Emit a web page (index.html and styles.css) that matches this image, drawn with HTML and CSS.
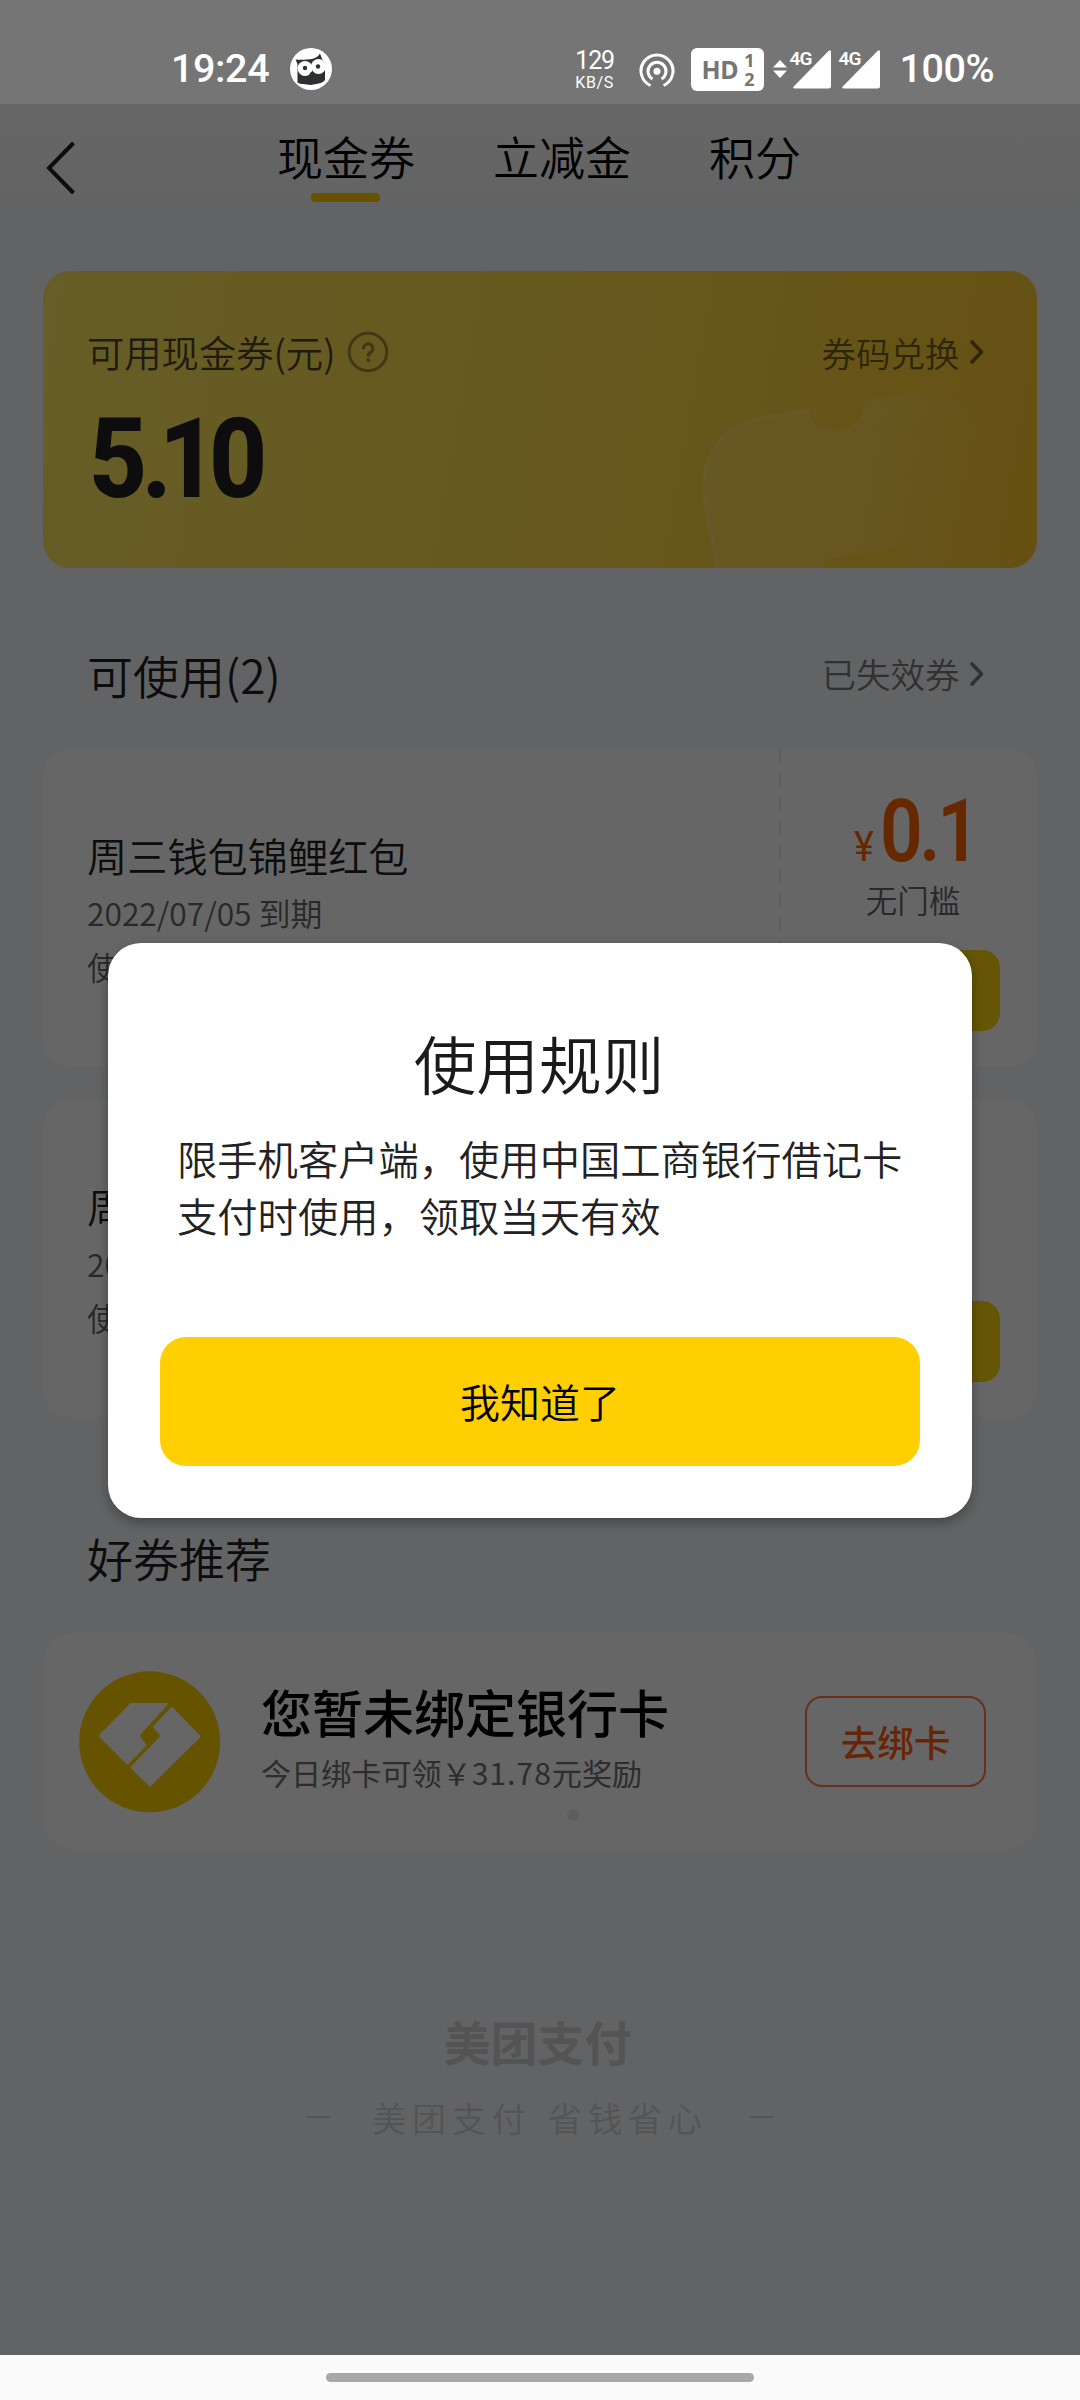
FILE: index.html
```html
<!DOCTYPE html>
<html lang="zh-CN">
<head>
<meta charset="utf-8">
<title>现金券</title>
<link rel="stylesheet" href="styles.css">
</head>
<body>
<div class="phone">
  <header class="status">
    <div class="status-left">
      <span class="clock">19:24</span>
      <svg class="owl" width="42" height="42" viewBox="0 0 42 42">
        <circle cx="21" cy="21" r="21" fill="#fff"/>
        <path d="M5.500 11.500C12 12 18 11.500 22 11C25 10.300 28 9 30 5.500L32.500 12L35 15V32C33 35 27 36 21 37C15 36 10 36.500 7.500 34.500V16Z" fill="#2d3032"/>
        <circle cx="15" cy="20.500" r="7.500" fill="#fff"/>
        <circle cx="28.500" cy="18.500" r="7.500" fill="#fff"/>
        <path d="M19.500 25L22 24L24.500 25L22 29Z" fill="#2d3032"/>
        <circle cx="15" cy="20" r="2.200" fill="#2d3032"/>
        <circle cx="28" cy="18.500" r="2.200" fill="#2d3032"/>
      </svg>
    </div>
    <div class="status-right">
      <div class="speed"><span class="speed-num">129</span><span class="speed-unit">KB/S</span></div>
      <svg class="hotspot" width="36" height="36" viewBox="0 0 36 36" fill="none" stroke="#fff" stroke-width="3">
        <path d="M11.500 32.500A16 16 0 1 1 24.500 32.500"/>
        <path d="M13.500 26A9 9 0 1 1 22.500 26"/>
        <circle cx="18" cy="18.300" r="3.500" fill="#fff" stroke="none"/>
      </svg>
      <div class="hd"><span class="hd-label">HD</span><span class="hd-sims"><span>1</span><span>2</span></span></div>
      <svg class="updown" width="14" height="18" viewBox="0 0 14 18" fill="#fff"><path d="M0 7.500L7 0L14 7.500ZM0 10.500H14L7 18Z"/></svg>
      <div class="signal">
        <svg width="38" height="39" viewBox="0 0 38 39"><path d="M35.500 1Q38 -1 38 2V36Q38 38.500 35.500 38.500H2Q-1 38.500 1 36.300Z" fill="#fff"/></svg>
        <span class="net">4G</span>
      </div>
      <div class="signal">
        <svg width="38" height="39" viewBox="0 0 38 39"><path d="M35.500 1Q38 -1 38 2V36Q38 38.500 35.500 38.500H2Q-1 38.500 1 36.300Z" fill="#fff"/></svg>
        <span class="net">4G</span>
      </div>
      <span class="battery">100%</span>
    </div>
  </header>

  <main class="page">
    <nav class="nav">
      <svg class="back" width="30" height="54" viewBox="0 0 30 54"><path d="M27.500 2L3 27L27.500 52" fill="none" stroke="#222" stroke-width="4"/></svg>
      <div class="tabs">
        <div class="tab active">现金券</div>
        <div class="tab">立减金</div>
        <div class="tab">积分</div>
      </div>
    </nav>

    <section class="hero">
      <svg class="hero-art" width="994" height="297" viewBox="43 271 994 297">
        <defs>
          <linearGradient id="fade" gradientUnits="userSpaceOnUse" x1="700" y1="440" x2="1000" y2="500">
            <stop offset="0" stop-color="#fff" stop-opacity=".12"/>
            <stop offset=".6" stop-color="#fff" stop-opacity=".1"/>
            <stop offset="1" stop-color="#fff" stop-opacity="0"/>
          </linearGradient>
          <linearGradient id="rim" x1="0" y1="0" x2="1" y2="0">
            <stop offset="0" stop-color="#fff" stop-opacity=".16"/>
            <stop offset=".45" stop-color="#fff" stop-opacity=".12"/>
            <stop offset="1" stop-color="#fff" stop-opacity="0"/>
          </linearGradient>
        </defs>
        <path d="M717 568L704 500C698 458 723 423 764 417L807 410C812 442 864 440 866 401L912 394C945 388 962 398 974 420C984 440 990 480 1007 568H909L906 547L824 560L825 568Z" fill="url(#fade)"/>
        <path d="M717 568L704 500C698 458 723 423 764 417L807 410C812 442 864 440 866 401L912 394C930 390 942 391 950 395" fill="none" stroke="url(#rim)" stroke-width="4"/>
      </svg>
      <div class="hero-top">
        <div class="hero-label">可用现金券(元)
          <svg width="42" height="42" viewBox="0 0 42 42" fill="none" stroke="#a18f36" stroke-width="3"><circle cx="21" cy="21" r="18.800"/><path d="M16.500 18.200A4.700 4.700 0 1 1 23.500 21.500Q21.200 22.700 21.200 25.500" stroke-width="3.200"/><path d="M21.200 27.500V30.800" stroke-width="3.600"/></svg>
        </div>
        <div class="link hero-link">券码兑换<svg width="16" height="26" viewBox="0 0 16 26"><path d="M3 3L12.500 13L3 23" fill="none" stroke="currentColor" stroke-width="3.600" stroke-linecap="round" stroke-linejoin="round"/></svg></div>
      </div>
      <div class="balance">5<span class="point">.</span><span class="one">1</span>0</div>
    </section>

    <div class="section-head">
      <h2>可使用(2)</h2>
      <div class="link">已失效券<svg width="16" height="26" viewBox="0 0 16 26"><path d="M3 3L12.500 13L3 23" fill="none" stroke="currentColor" stroke-width="3.600" stroke-linecap="round" stroke-linejoin="round"/></svg></div>
    </div>

    <section class="coupons">
      <article class="coupon">
        <div class="coupon-info">
          <h3>周三钱包锦鲤红包</h3>
          <p>2022/07/05 到期</p>
          <p class="rule">使用</p>
        </div>
        <div class="coupon-side">
          <div class="price"><span class="yen">¥</span><span class="amount">0.1</span></div>
          <div class="cond">无门槛</div>
          <div class="use"></div>
        </div>
      </article>
      <article class="coupon">
        <div class="coupon-info">
          <h3>周三</h3>
          <p>2022</p>
          <p class="rule">使用</p>
        </div>
        <div class="coupon-side">
          <div class="price"></div>
          <div class="cond"></div>
          <div class="use"></div>
        </div>
      </article>
    </section>

    <h2 class="rec-title">好券推荐</h2>
    <section class="bind">
      <svg class="bind-logo" width="142" height="142" viewBox="79 1670.500 142 142">
        <circle cx="149.700" cy="1741.300" r="70.500" fill="#ffcf02"/>
        <g fill="#fff" stroke="#fff" stroke-width="2" stroke-linejoin="round">
          <path d="M131 1703.500H167L140 1733Q138.500 1735.500 140 1737.500L145.500 1744.800L127.400 1763L99.800 1735.500Z"/>
          <path d="M172 1707.500L199.500 1736L150 1785L131.500 1767L160 1737.500Q161.500 1735.300 160 1733L154 1726.500Z"/>
        </g>
      </svg>
      <div class="bind-text">
        <div class="bind-title">您暂未绑定银行卡</div>
        <div class="bind-sub">今日绑卡可领￥<span class="sum">31.78</span>元奖励</div>
      </div>
      <div class="bind-btn">去绑卡</div>
      <i class="pager"></i>
    </section>

    <footer class="foot">
      <div class="brand">美团支付</div>
      <div class="slogan"><i></i><span>美团支付 省钱省心</span><i></i></div>
    </footer>
  </main>

  <div class="gesture"><i></i></div>

  <div class="scrim"></div>
  <div class="modal">
    <div class="modal-title">使用规则</div>
    <p class="modal-body">限手机客户端，使用中国工商银行借记卡支付时使用，领取当天有效</p>
    <div class="modal-btn">我知道了</div>
  </div>
</div>
</body>
</html>
```
FILE: styles.css
```css
* { box-sizing: border-box; margin: 0; padding: 0; }
body { font-family: "Noto Sans CJK SC", sans-serif; font-weight: 350; color: #222; }
svg { display: block; flex: none; }
h2, h3 { font-weight: 350; }

.phone { position: relative; width: 1080px; height: 2400px; overflow: hidden; display: flex; flex-direction: column; }

/* status bar */
.status { flex: none; height: 104px; background: #757575; color: #fff; font-family: Roboto, sans-serif; font-weight: 400; display: flex; justify-content: space-between; padding: 47px 86px 0 171px; }
.status-left { display: flex; gap: 21px; height: 44px; }
.clock, .battery { font-size: 39.500px; font-weight: 500; line-height: 44px; }
.clock { letter-spacing: -.4px; }
.owl { margin-top: 1px; }
.status-right { display: flex; height: 44px; }
.speed { width: 40px; display: flex; flex-direction: column; align-items: center; margin-right: 24px; }
.speed-num { font-size: 25px; line-height: 28px; letter-spacing: -1.200px; }
.speed-unit { font-size: 16px; line-height: 16px; letter-spacing: .6px; }
.hotspot { margin: 6px 16px 0 0; }
.hd { width: 73px; height: 43px; margin: 1px 9px 0 0; border-radius: 6px; background: #fff; color: #757575; font-weight: 700; font-family: "Noto Sans", sans-serif; display: flex; align-items: center; padding: 0 9px 0 11px; justify-content: space-between; }
.hd-label { font-size: 25px; line-height: 40px; letter-spacing: -.5px; margin-top: -2px; }
.hd-sims { display: flex; flex-direction: column; font-size: 18px; line-height: 19px; text-align: center; }
.updown { margin: 13px 6px 0 0; }
.signal { position: relative; width: 38px; margin: 3px 11px 0 0; height: 39px; }
.net { position: absolute; left: -3px; top: -2px; font-size: 19px; line-height: 22px; font-weight: 600; letter-spacing: -.8px; }
.battery { margin-left: 9px; white-space: nowrap; letter-spacing: -.5px; }

/* page */
.page { flex: 1; background: linear-gradient(#ffffff 0, #fdfdfd 40px, #f5f7fa 110px); padding: 0 43px; display: flex; flex-direction: column; }
.nav { flex: none; height: 167px; display: flex; padding-top: 17px; }
.back { margin: 19.500px 0 0 3px; }
.tabs { display: flex; gap: 78px; margin-left: 201px; }
.tab { font-size: 46px; line-height: 69px; color: #000; display: flex; flex-direction: column; align-items: center; }
.active::after { content: ""; width: 69px; height: 9px; margin: 3px 2px 0 0; border-radius: 4px; background: #ffcf02; }

.hero { flex: none; position: relative; height: 297px; border-radius: 27px; overflow: hidden; background: linear-gradient(100deg, #ffe862 0%, #ffde4b 50%, #ffca30 100%); padding: 53px 52px 0 44px; }
.hero-art { position: absolute; inset: 0; }
.hero-top { position: relative; display: flex; justify-content: space-between; height: 56px; }
.hero-label { display: flex; font-size: 37.300px; line-height: 56px; gap: 12px; color: #4e4826; white-space: nowrap; }
.hero-label svg { margin-top: 7px; }
.link { display: flex; font-size: 34.500px; line-height: 56px; color: #7c7c7c; gap: 9.500px; }
.link svg { margin-top: 15.500px; }
.hero-link { color: #71601d; }
.hero-link svg { margin-top: 14.500px; }
.balance { position: relative; font-family: Roboto, sans-serif; font-weight: 800; font-size: 111px; line-height: 120px; letter-spacing: -6px; transform: scaleX(.91); transform-origin: 0 0; margin: 19px 0 0 2px; }
.point { letter-spacing: -14px; }
.one { letter-spacing: -9px; }

.section-head { flex: none; height: 181px; display: flex; justify-content: space-between; padding: 71px 52px 0 44px; line-height: 70px; }
h2 { font-size: 46px; line-height: 70px; }
.section-head .link { margin-top: 6px; }

.coupons { flex: none; display: flex; flex-direction: column; gap: 34px; }
.coupon { height: 317px; border-radius: 27px; background: #fff; display: flex; justify-content: space-between; }
.coupon-info { padding: 76px 0 0 44px; }
h3 { font-size: 40.200px; line-height: 60px; }
.coupon-info p { font-size: 31.800px; line-height: 54px; color: #666; }
.coupon-side { width: 258px; padding-right: 37px; display: flex; flex-direction: column; align-items: center; background: repeating-linear-gradient(#ececec 0 14px, transparent 14px 24px) 0 0 / 2px 100% no-repeat; padding-left: 47px; }
.price { display: flex; width: 100%; height: 118px; padding: 31px 0 0 28px; color: #ff6400; font-family: Roboto, sans-serif; align-items: baseline; white-space: nowrap; }
.yen { font-size: 42px; font-weight: 400; width: 26px; transform: scaleX(.9); transform-origin: 0 0; }
.amount { font-size: 87px; line-height: 102px; font-weight: 600; transform: scaleX(.86); transform-origin: 0 0; letter-spacing: -4px; }
.cond { margin-top: 8px; height: 48px; font-size: 31.500px; line-height: 48px; color: #666; }
.use { width: 174px; height: 81px; margin-top: 27px; border-radius: 18px; background: #ffd50a; }

.rec-title { flex: none; margin: 105px 0 41px 44px; }
.bind { flex: none; position: relative; margin: 0 1px; height: 216px; border-radius: 28px; background: #fff; display: flex; padding: 0 50px 0 35px; }
.bind-logo { margin-top: 37.500px; }
.bind-text { margin: 40px 0 0 40px; flex: 1; white-space: nowrap; }
.bind-title { font-size: 51px; line-height: 76px; font-weight: 500; color: #000; }
.bind-sub { font-size: 30.100px; line-height: 46px; color: #707070; font-weight: 400; }
.sum { letter-spacing: 1px; }
.bind-btn { margin-top: 63px; width: 181px; height: 91px; border: 2px solid #ff7843; border-radius: 17px; color: #ff6010; font-size: 36.500px; font-weight: 500; line-height: 87px; text-align: center; }
.pager { position: absolute; left: 523px; top: 176px; width: 12px; height: 12px; border-radius: 50%; background: #e8e8e8; }

.foot { padding-top: 157px; display: flex; flex-direction: column; align-items: center; color: #d2d3d5; }
.brand { font-size: 47px; line-height: 70px; font-weight: 700; margin-right: 5px; }
.slogan { display: flex; align-items: center; font-size: 34px; line-height: 50px; letter-spacing: 5.900px; word-spacing: 3px; margin-top: 17px; }
.slogan i { width: 23px; height: 2px; background: #d2d3d5; margin-top: -2px; }
.slogan span { margin: 0 42px 0 42px; }

.gesture { flex: none; height: 45px; background: #fafafa; display: flex; justify-content: center; padding-top: 18px; }
.gesture i { width: 428px; height: 9px; border-radius: 4.500px; background: #a8a8a8; }

/* dialog */
.scrim { position: absolute; left: 0; right: 0; top: 104px; bottom: 45px; background: rgba(0, 0, 0, .6); }
.modal { position: absolute; left: 108px; top: 943px; width: 864px; height: 575px; border-radius: 33px; background: #fff; padding: 72px 52px 0; box-shadow: 0 5px 12px rgba(0, 0, 0, .3); }
.modal-title { font-size: 62.700px; line-height: 94px; text-align: center; color: #1a1a1a; margin-right: 2px; }
.modal-body { font-size: 40.300px; line-height: 57px; padding: 20px 0 0 17px; width: 746px; color: #222; }
.modal-btn { height: 129px; margin-top: 94px; border-radius: 26px; background: #ffcf02; color: #000; font-size: 40px; line-height: 129px; text-align: center; }
```
